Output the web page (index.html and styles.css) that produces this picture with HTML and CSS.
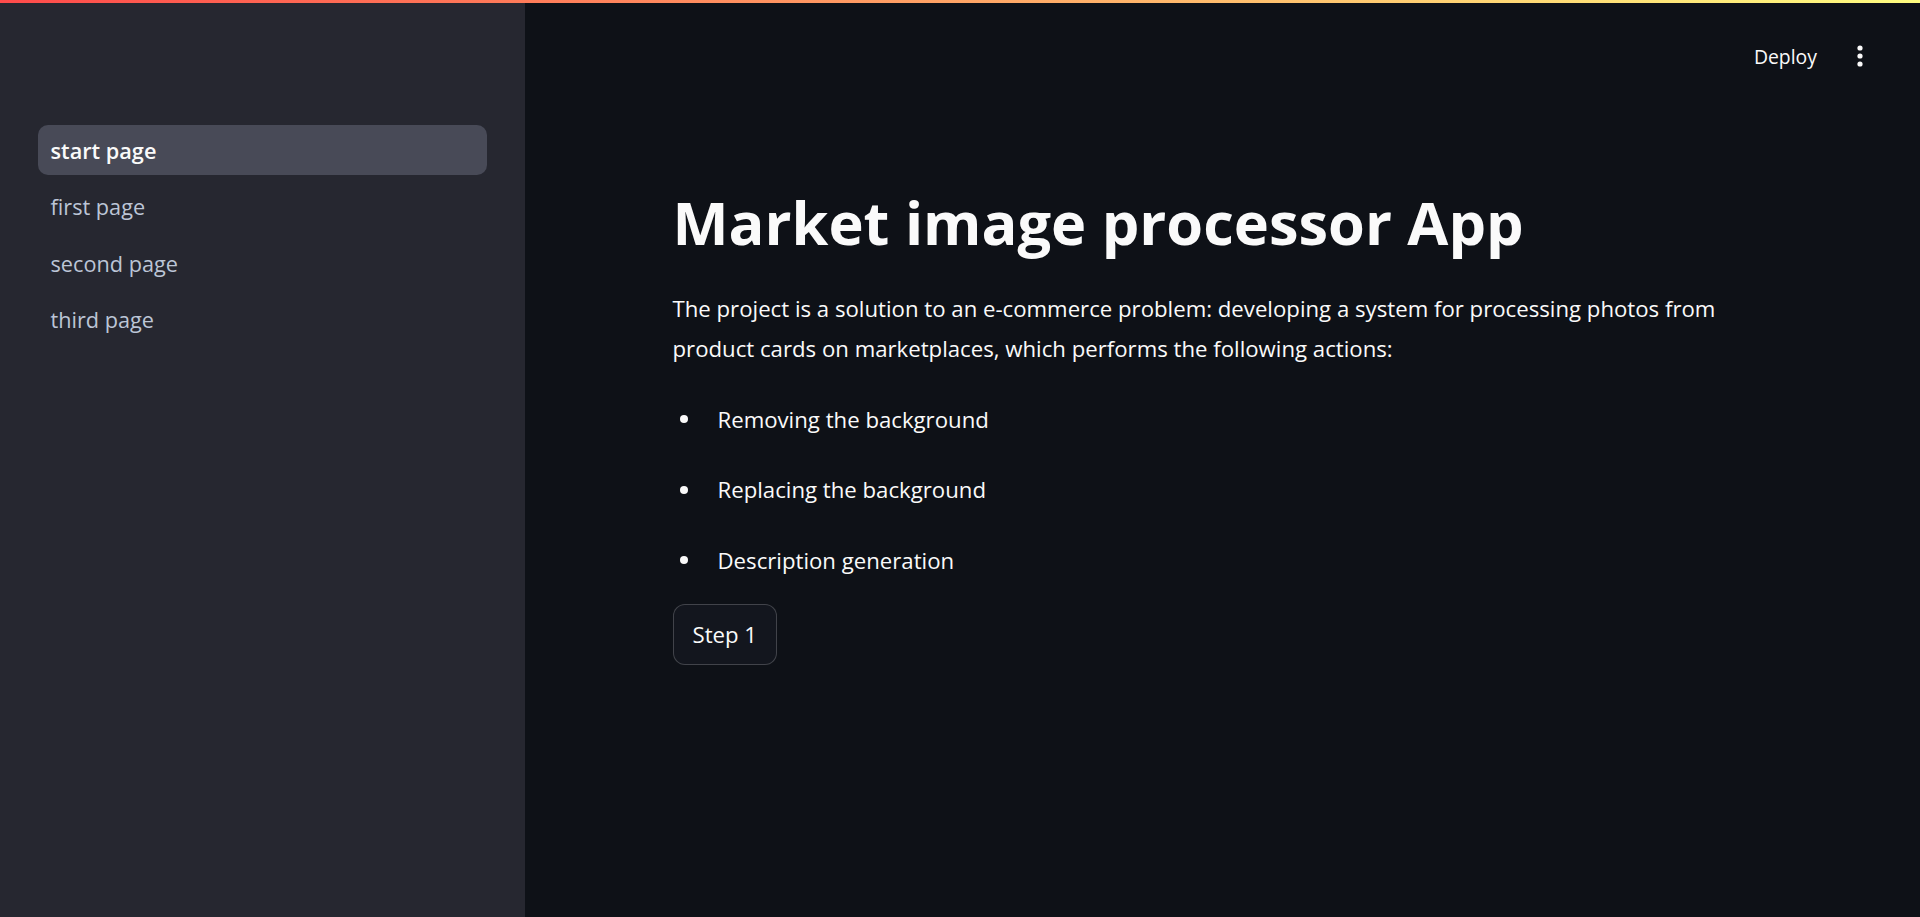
FILE: index.html
```html
<!DOCTYPE html>
<html lang="en">
<head>
<meta charset="utf-8">
<title>Market image processor App</title>
<link rel="stylesheet" href="styles.css">
</head>
<body>
<div class="decoration"></div>
<div class="app">
  <aside class="sidebar">
    <nav class="nav">
      <a class="nav-link active" href="#">start page</a>
      <a class="nav-link" href="#">first page</a>
      <a class="nav-link" href="#">second page</a>
      <a class="nav-link" href="#">third page</a>
    </nav>
  </aside>
  <main class="main">
    <header class="header">
      <button class="deploy">Deploy</button>
      <button class="menu" aria-label="Main menu">
        <svg width="8" height="28" viewBox="0 0 8 28"><circle cx="4" cy="4" r="2.6" fill="#fafafa"/><circle cx="4" cy="12" r="2.6" fill="#fafafa"/><circle cx="4" cy="20" r="2.6" fill="#fafafa"/></svg>
      </button>
    </header>
    <section class="block">
      <h1 class="title">Market image processor App</h1>
      <div class="markdown">
        <p class="intro">The project is a solution to an e-commerce problem: developing a system for processing photos from product cards on marketplaces, which performs the following actions:</p>
        <ul class="list">
          <li class="item"><span class="dot"></span><span>Removing the background</span></li>
          <li class="item"><span class="dot"></span><span>Replacing the background</span></li>
          <li class="item"><span class="dot"></span><span>Description generation</span></li>
        </ul>
      </div>
      <button class="step">Step 1</button>
    </section>
  </main>
</div>
</body>
</html>
```

FILE: styles.css
```css
* { box-sizing: border-box; }
html, body { margin: 0; padding: 0; height: 100%; }
body {
  background: #0e1117;
  color: #fafafa;
  font-family: "Open Sans", "Noto Sans", sans-serif;
  overflow: hidden;
}
.decoration {
  position: fixed;
  top: 0; left: 0; right: 0;
  height: 3px;
  background: linear-gradient(90deg, rgb(255, 75, 75), rgb(255, 253, 128));
  z-index: 10;
}
.app { display: flex; height: 100vh; }
.sidebar {
  width: 525px;
  flex: 0 0 525px;
  background: #262730;
  padding: 125px 38px 0;
}
.nav { display: flex; flex-direction: column; gap: 6.3px; }
.nav-link {
  display: flex;
  align-items: center;
  height: 50px;
  padding: 1px 12.5px 0;
  border-radius: 10px;
  font-size: 21.7px;
  color: #bcc5d6;
  text-decoration: none;
}
.nav-link.active { background: #484a57; color: #fafafa; font-weight: 600; }
.main { flex: 1; display: flex; flex-direction: column; }
.header {
  height: 116px;
  flex: 0 0 116px;
  display: flex;
  align-items: center;
  justify-content: flex-end;
  padding-right: 56px;
  gap: 39px;
}
.deploy, .menu {
  background: none; border: 0; color: #fafafa; padding: 0;
  font-family: inherit; font-size: 19.4px;
}
.deploy { margin-bottom: 3px; }
.menu { display: flex; }
.block {
  width: 100%;
  max-width: 1150px;
  margin: 0 auto;
  padding: 0 25px;
}
.title {
  margin: 65px 0 0;
  font-size: 59.5px;
  line-height: 82px;
  font-weight: 700;
}
.markdown { margin-top: 25.7px; }
.intro { margin: 0 0 30.7px; font-size: 22.2px; line-height: 40px; }
.list { list-style: none; margin: 0; padding: 0; }
.item { display: flex; align-items: center; height: 40px; margin-bottom: 30.5px; font-size: 22.2px; }
.item:last-child { margin-bottom: 0; }
.dot { width: 8px; height: 8px; border-radius: 50%; background: #fafafa; margin: 0 30px 0 7px; }
.step {
  display: block;
  margin-top: 23.6px;
  height: 61px;
  padding: 0 19px;
  background: #13161e;
  border: 1px solid rgba(250, 250, 250, 0.2);
  border-radius: 12px;
  color: #fafafa;
  font-family: inherit;
  font-size: 22.2px;
}
```
